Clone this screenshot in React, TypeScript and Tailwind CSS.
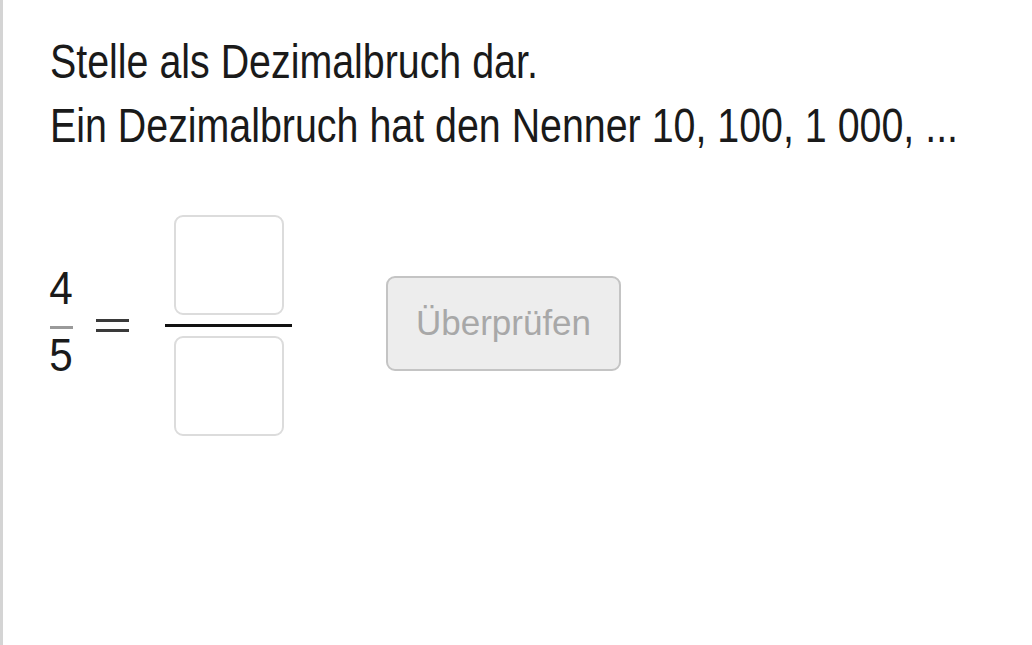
const font = {
  fontFamily: '"Liberation Sans", Arial, sans-serif',
};

function AnswerBox() {
  return (
    <div className="w-[110px] h-[100px] rounded-[9px] border-2 border-[#dcdcdc] bg-white" />
  );
}

export default function App() {
  return (
    <div
      className="min-h-[645px] w-[1032px] bg-white border-l-[3px] border-[#d4d4d4] pl-[47px] pt-[30px] text-[#1a1a1a]"
      style={font}
    >
      {/* Aufgabe – schmale Schrift */}
      <div className="text-[48px] leading-[64px] whitespace-nowrap origin-left scale-x-[0.82]">
        <p>Stelle als Dezimalbruch dar.</p>
        <p>Ein Dezimalbruch hat den Nenner 10, 100, 1 000, ...</p>
      </div>

      <div className="mt-[57px] flex items-center">
        {/* 4/5 */}
        <div className="flex flex-col items-center w-[23px] text-[47px]">
          <span className="h-[46px] leading-[38px] scale-x-[0.9]">4</span>
          <div className="w-[23px] h-[3px] bg-[#9a9a9a] mt-[11px] mb-[7px]" />
          <span className="h-[46px] leading-[38px] scale-x-[0.9]">5</span>
        </div>

        <div className="ml-[23px] flex flex-col gap-[7px] w-[33px]">
          <div className="h-[3px] bg-[#3a3a3a]" />
          <div className="h-[3px] bg-[#3a3a3a]" />
        </div>

        {/* Bruch mit Eingaben */}
        <div className="ml-[36px] flex flex-col items-center gap-[9px]">
          <AnswerBox />
          <div className="w-[127px] h-[3px] bg-[#111]" />
          <AnswerBox />
        </div>

        <button
          disabled
          className="ml-[94px] mb-[5px] w-[235px] h-[95px] rounded-[9px] border-2 border-[#c4c4c4] bg-[#ededed] text-[#a8a8a8] text-[35px]"
        >
          Überprüfen
        </button>
      </div>
    </div>
  );
}
